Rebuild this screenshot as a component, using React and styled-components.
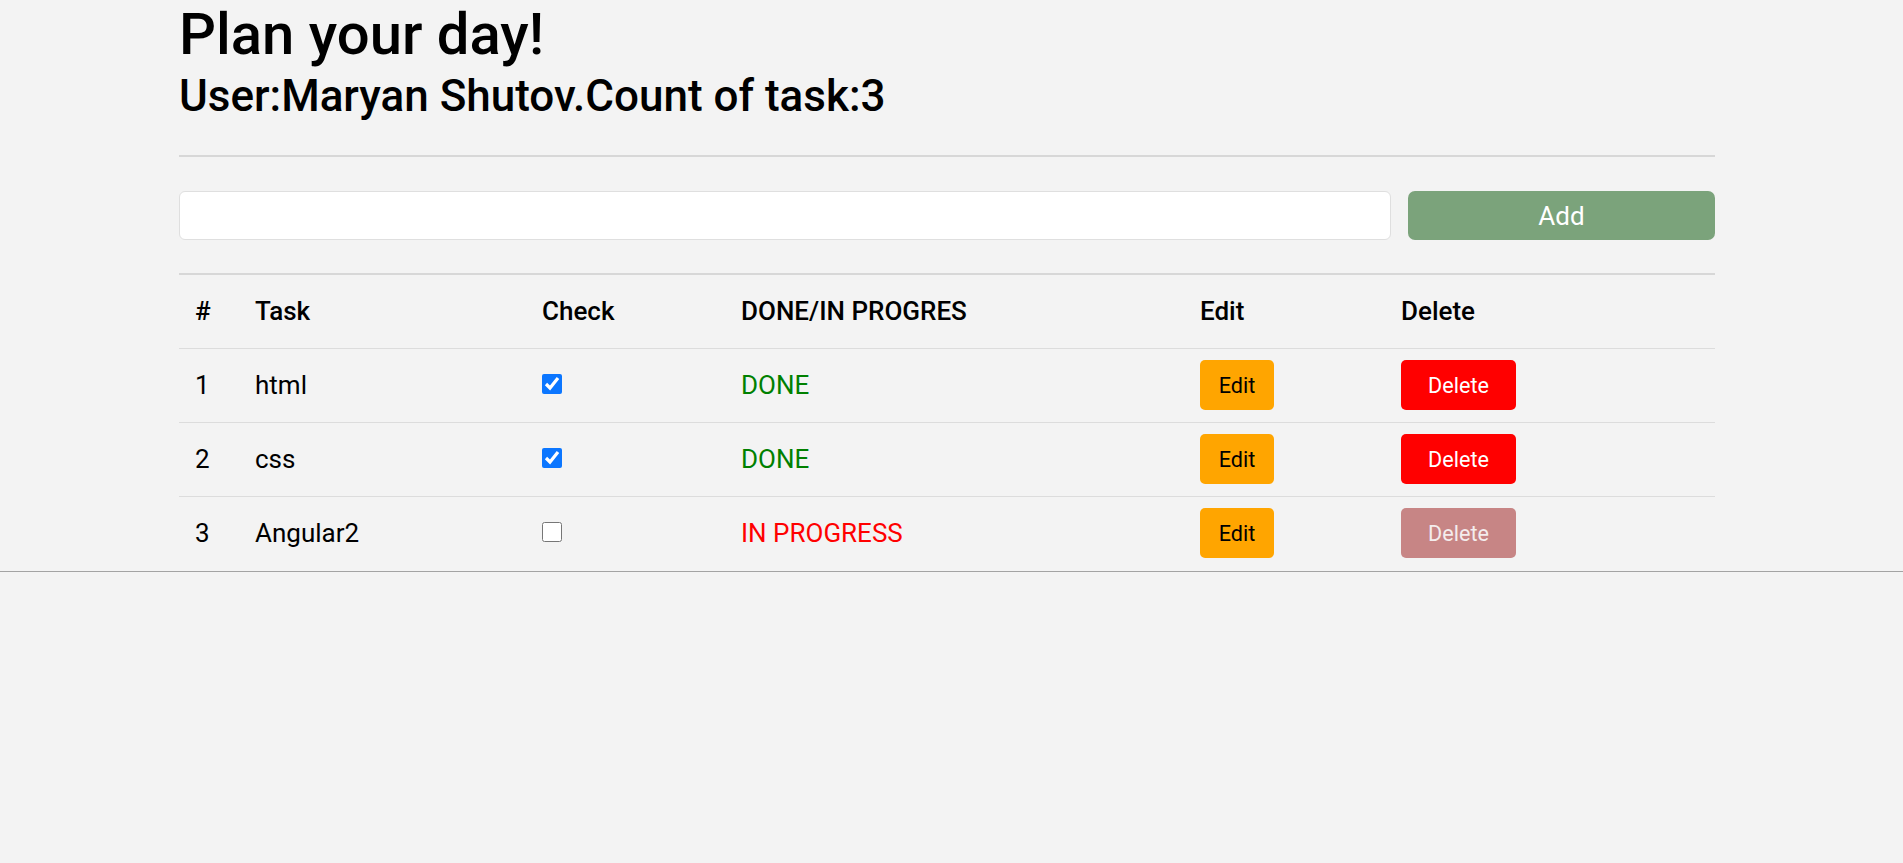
import { useState } from 'react';
import styled, { createGlobalStyle } from 'styled-components';

const GlobalStyle = createGlobalStyle`
  body {
    margin: 0;
    background: #f3f3f3;
    font-family: Roboto, "Liberation Sans", sans-serif;
    color: #000;
  }
`;

const Page = styled.section`
  width: 100%;
  border-bottom: 1px solid #a3a3a3;
`;

const Container = styled.div`
  margin-left: 179px;
  width: 1536px;
`;

const Title = styled.h1`
  margin: 0;
  font-size: 58px;
  font-weight: 500;
  line-height: 1.2;
`;

const SubTitle = styled.h2`
  margin: 0;
  font-size: 44px;
  font-weight: 500;
  line-height: 1.2;
`;

const Divider = styled.hr`
  margin: 33px 0 34px;
  border: 0;
  border-top: 2px solid #d7d7d7;
`;

const Form = styled.form`
  display: flex;
  gap: 17px;
  margin-bottom: 33px;
`;

const Input = styled.input`
  flex: 1;
  height: 49px;
  box-sizing: border-box;
  border: 1px solid #dfdfdf;
  border-radius: 6px;
  background: #fff;
  font: inherit;
  font-size: 24px;
  padding: 0 12px;
  outline: none;
`;

const AddButton = styled.button`
  width: 307px;
  height: 49px;
  border: 0;
  border-radius: 7px;
  background: #7ba37b;
  color: #fff;
  font-family: inherit;
  font-size: 26px;
  cursor: pointer;
`;

const Table = styled.table`
  width: 100%;
  border-collapse: collapse;
  table-layout: fixed;
  border-top: 2px solid #d7d7d7;
  font-size: 26px;
  line-height: 1.5;
`;

const HeadCell = styled.th`
  text-align: left;
  font-weight: 500;
  padding: 17px 0 17px 16px;
  border-bottom: 1px solid #dcdcdc;
  vertical-align: middle;
`;

const Row = styled.tr`
  border-bottom: 1px solid #dcdcdc;
  &:last-child {
    border-bottom-color: transparent;
  }
`;

const Cell = styled.td`
  padding: 11px 0 12px 16px;
  vertical-align: middle;
`;

const CheckBox = styled.input`
  margin: 0 0 6px;
  width: 20px;
  height: 20px;
  vertical-align: middle;
  accent-color: #0b76ff;
`;

const Status = styled.span`
  color: ${(p) => (p.done ? '#008000' : '#ff0000')};
`;

const ActionButton = styled.button`
  width: ${(p) => p.width}px;
  height: 50px;
  border: 0;
  border-radius: 5px;
  font-family: inherit;
  font-size: 21.6px;
  background: ${(p) => p.bg};
  color: ${(p) => p.fg};
  cursor: pointer;
  &:disabled {
    background: #c78585;
    color: #f4eded;
    cursor: default;
  }
`;

const columns = [
  { label: '#', width: 60 },
  { label: 'Task', width: 287 },
  { label: 'Check', width: 199 },
  { label: 'DONE/IN PROGRES', width: 459 },
  { label: 'Edit', width: 201 },
  { label: 'Delete', width: 330 },
];

export default function App() {
  const [text, setText] = useState('');
  const [tasks, setTasks] = useState([
    { id: 1, title: 'html', done: true },
    { id: 2, title: 'css', done: true },
    { id: 3, title: 'Angular2', done: false },
  ]);

  const toggle = (id) =>
    setTasks(tasks.map((t) => (t.id === id ? { ...t, done: !t.done } : t)));

  const remove = (id) => setTasks(tasks.filter((t) => t.id !== id));

  const add = (e) => {
    e.preventDefault();
    if (!text.trim()) return;
    setTasks([...tasks, { id: tasks.length + 1, title: text, done: false }]);
    setText('');
  };

  return (
    <>
      <GlobalStyle />
      <Page>
        <Container>
          <Title>Plan your day!</Title>
          <SubTitle>User:Maryan Shutov.Count of task:{tasks.length}</SubTitle>
          <Divider />
          <Form onSubmit={add}>
            <Input value={text} onChange={(e) => setText(e.target.value)} />
            <AddButton type="submit">Add</AddButton>
          </Form>
          <Table>
            <colgroup>
              {columns.map((c) => (
                <col key={c.label} style={{ width: c.width }} />
              ))}
            </colgroup>
            <thead>
              <tr>
                {columns.map((c) => (
                  <HeadCell key={c.label}>{c.label}</HeadCell>
                ))}
              </tr>
            </thead>
            <tbody>
              {tasks.map((t, i) => (
                <Row key={t.id}>
                  <Cell>{i + 1}</Cell>
                  <Cell>{t.title}</Cell>
                  <Cell>
                    <CheckBox type="checkbox" checked={t.done} onChange={() => toggle(t.id)} />
                  </Cell>
                  <Cell>
                    <Status done={t.done}>{t.done ? 'DONE' : 'IN PROGRESS'}</Status>
                  </Cell>
                  <Cell>
                    <ActionButton width={74} bg="#ffa500" fg="#000">Edit</ActionButton>
                  </Cell>
                  <Cell>
                    <ActionButton
                      width={115}
                      bg="#ff0000"
                      fg="#fff"
                      disabled={!t.done}
                      onClick={() => remove(t.id)}
                    >
                      Delete
                    </ActionButton>
                  </Cell>
                </Row>
              ))}
            </tbody>
          </Table>
        </Container>
      </Page>
    </>
  );
}
